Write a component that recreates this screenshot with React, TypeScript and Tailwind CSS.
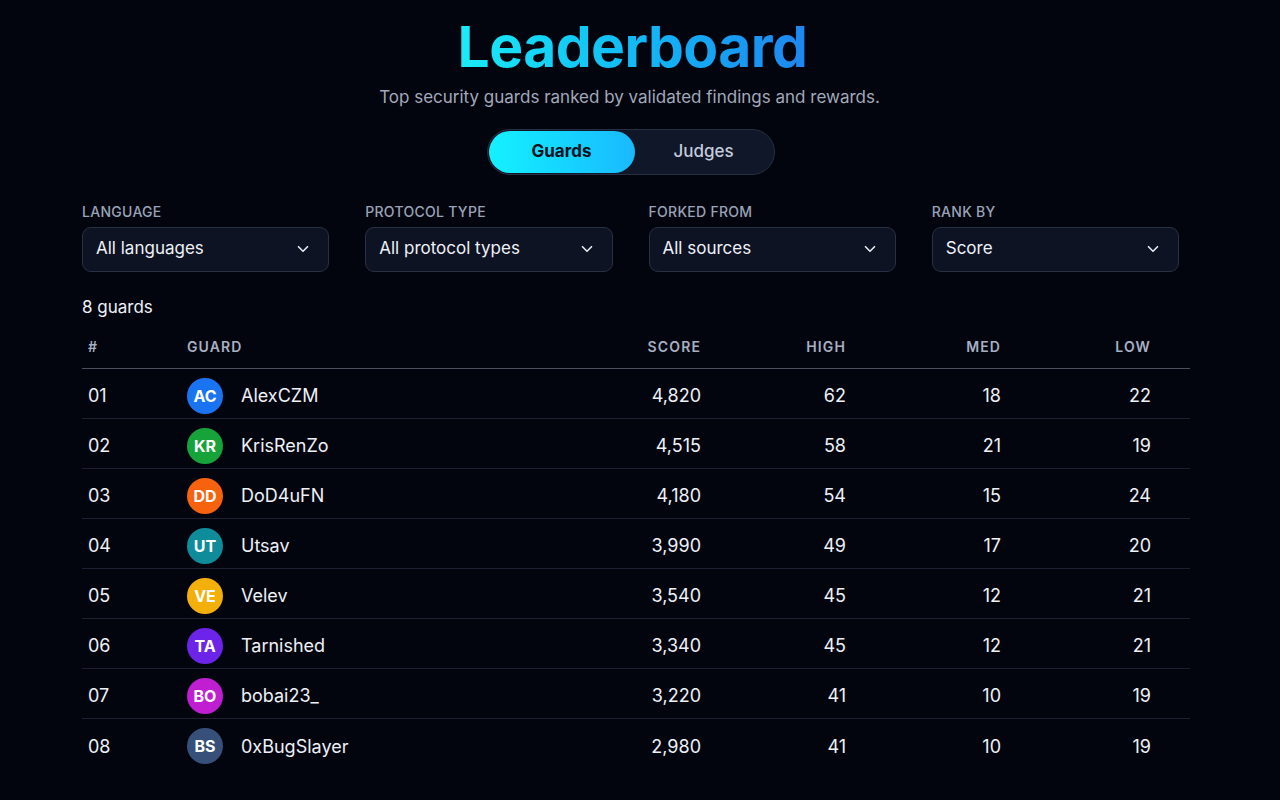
import { ChevronDown } from "lucide-react"

const guards = [
  { rank: "01", initials: "AC", name: "AlexCZM", color: "bg-[#1a74f2]", score: "4,820", high: 62, med: 18, low: 22 },
  { rank: "02", initials: "KR", name: "KrisRenZo", color: "bg-[#16a33a]", score: "4,515", high: 58, med: 21, low: 19 },
  { rank: "03", initials: "DD", name: "DoD4uFN", color: "bg-[#f7620f]", score: "4,180", high: 54, med: 15, low: 24 },
  { rank: "04", initials: "UT", name: "Utsav", color: "bg-[#0f8c99]", score: "3,990", high: 49, med: 17, low: 20 },
  { rank: "05", initials: "VE", name: "Velev", color: "bg-[#f3b00b]", score: "3,540", high: 45, med: 12, low: 21 },
  { rank: "06", initials: "TA", name: "Tarnished", color: "bg-[#6b24e8]", score: "3,340", high: 45, med: 12, low: 21 },
  { rank: "07", initials: "BO", name: "bobai23_", color: "bg-[#c01fd1]", score: "3,220", high: 41, med: 10, low: 19 },
  { rank: "08", initials: "BS", name: "0xBugSlayer", color: "bg-[#36507a]", score: "2,980", high: 41, med: 10, low: 19 },
]

const filters = [
  { label: "Language", value: "All languages" },
  { label: "Protocol type", value: "All protocol types" },
  { label: "Forked from", value: "All sources" },
  { label: "Rank by", value: "Score" },
]

function Select({ label, value }: { label: string; value: string }) {
  return (
    <div className="flex flex-col gap-[7px]">
      <span className="text-[14px] font-medium uppercase tracking-[0.02em] text-[#9aa3b6] leading-4">{label}</span>
      <button className="flex h-[45px] items-center justify-between rounded-[9px] border border-[#283043] bg-[#0d1322] pl-[13px] pr-[16px] text-[17px] text-[#eef1f7]">
        <span>{value}</span>
        <ChevronDown size={18} strokeWidth={2.2} className="text-[#e6e9f0]" />
      </button>
    </div>
  )
}

export default function App() {
  return (
    <div className="min-h-[800px] bg-[#03050e] font-['Inter',sans-serif] text-[#eef1f7]">
      <div className="flex w-[1265px] flex-col pl-[82px] pr-[82px] pt-[16px]">
        <h1 className="self-center bg-gradient-to-r from-[#1cecf6] to-[#1e86f0] bg-clip-text text-[57px] font-bold leading-[62px] tracking-[-0.01em] text-transparent">
          Leaderboard
        </h1>
        <p className="mt-[7px] -translate-x-[3px] text-center text-[17px] text-[#a1a9ba]">
          Top security guards ranked by validated findings and rewards.
        </p>

        <div className="mt-[18px] flex -translate-x-[2px] self-center rounded-full border border-[#263044] bg-[#0f1728] p-[1px]">
          <button className="h-[42px] w-[146px] rounded-full bg-gradient-to-r from-[#16f1ff] to-[#1ab9ff] text-[17px] font-bold text-[#03121b]">
            Guards
          </button>
          <button className="h-[42px] w-[138px] rounded-full text-[17px] font-medium text-[#c4cbdd]">Judges</button>
        </div>

        <div className="mt-[29px] grid w-[1097px] grid-cols-4 gap-x-[36px]">
          {filters.map((f) => (
            <Select key={f.label} label={f.label} value={f.value} />
          ))}
        </div>

        <p className="mt-[23px] text-[17px] text-[#eef1f7]">8 guards</p>

        <div className="mt-[16px] w-[1108px]">
          <div className="grid h-[33px] grid-cols-[105px_1fr_120px_145px_155px_150px] items-start border-b border-[#4a505e] pr-[39px] text-[14px] font-semibold uppercase tracking-[0.08em] text-[#a7b0c3]">
            <span className="pl-[6px]">#</span>
            <span>Guard</span>
            <span className="text-right">Score</span>
            <span className="text-right">High</span>
            <span className="text-right">Med</span>
            <span className="text-right">Low</span>
          </div>
          {guards.map((g, i) => (
            <div
              key={g.rank}
              className={
                "grid h-[50px] grid-cols-[105px_1fr_120px_145px_155px_150px] items-center pr-[39px] pt-[4px] text-[18px] text-[#eef1f7] " +
                (i < guards.length - 1 ? "border-b border-[#1b2131]" : "")
              }
            >
              <span className="pl-[6px]">{g.rank}</span>
              <div className="flex items-center gap-[18px]">
                <span
                  className={
                    "flex h-[36px] w-[36px] items-center justify-center rounded-full text-[16px] font-bold text-white " + g.color
                  }
                >
                  {g.initials}
                </span>
                <span>{g.name}</span>
              </div>
              <span className="text-right">{g.score}</span>
              <span className="text-right">{g.high}</span>
              <span className="text-right">{g.med}</span>
              <span className="text-right">{g.low}</span>
            </div>
          ))}
        </div>
      </div>
    </div>
  )
}
